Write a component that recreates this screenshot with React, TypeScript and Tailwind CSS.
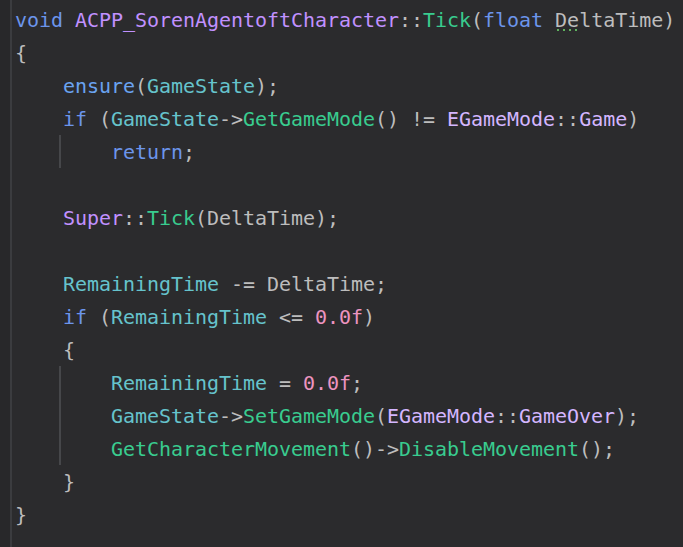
import React from "react";

type Tok = [string, string];

const K = "text-[#6c95eb]";
const C = "text-[#c191ff]";
const E = "text-[#d4b6ff]";
const M = "text-[#39cc8f]";
const F = "text-[#66c3cc]";
const N = "text-[#ed94c0]";
const D = "text-[#bdbdbd]";
const MAC = "text-[#6aa3f0]";

type Line = { indent: number; guide?: boolean; toks: Tok[] };

const lines: Line[] = [
  {
    indent: 0,
    toks: [
      [K, "void "],
      [C, "ACPP_SorenAgentoftCharacter"],
      [D, "::"],
      [M, "Tick"],
      [D, "("],
      [K, "float "],
      ["DELTA", ""],
      [D, ")"],
    ],
  },
  { indent: 0, toks: [[D, "{"]] },
  { indent: 1, toks: [[MAC, "ensure"], [D, "("], [F, "GameState"], [D, ");"]] },
  {
    indent: 1,
    toks: [
      [K, "if "],
      [D, "("],
      [F, "GameState"],
      [D, "->"],
      [M, "GetGameMode"],
      [D, "() != "],
      [E, "EGameMode"],
      [D, "::"],
      [E, "Game"],
      [D, ")"],
    ],
  },
  { indent: 2, guide: true, toks: [[K, "return"], [D, ";"]] },
  { indent: 0, toks: [] },
  { indent: 1, toks: [[C, "Super"], [D, "::"], [M, "Tick"], [D, "(DeltaTime);"]] },
  { indent: 0, toks: [] },
  { indent: 1, toks: [[F, "RemainingTime"], [D, " -= DeltaTime;"]] },
  {
    indent: 1,
    toks: [
      [K, "if "],
      [D, "("],
      [F, "RemainingTime"],
      [D, " <= "],
      [N, "0.0f"],
      [D, ")"],
    ],
  },
  { indent: 1, toks: [[D, "{"]] },
  { indent: 2, guide: true, toks: [[F, "RemainingTime"], [D, " = "], [N, "0.0f"], [D, ";"]] },
  {
    indent: 2,
    guide: true,
    toks: [
      [F, "GameState"],
      [D, "->"],
      [M, "SetGameMode"],
      [D, "("],
      [E, "EGameMode"],
      [D, "::"],
      [E, "GameOver"],
      [D, ");"],
    ],
  },
  {
    indent: 2,
    guide: true,
    toks: [
      [M, "GetCharacterMovement"],
      [D, "()->"],
      [M, "DisableMovement"],
      [D, "();"],
    ],
  },
  { indent: 1, toks: [[D, "}"]] },
  { indent: 0, toks: [[D, "}"]] },
];

function Delta() {
  return (
    <span className="text-[#bdbdbd]">
      <span className="relative inline-block">
        De
        <svg
          className="absolute left-[2px] top-[24px]"
          width="22"
          height="3"
          viewBox="0 0 22 3"
        >
          <rect x="0" y="0" width="2" height="2" fill="#5fb35f" />
          <rect x="6" y="0" width="2" height="2" fill="#5fb35f" />
          <rect x="12" y="0" width="2" height="2" fill="#5fb35f" />
          <rect x="18" y="0" width="2" height="2" fill="#5fb35f" />
        </svg>
      </span>
      ltaTime
    </span>
  );
}

function Code({ toks }: { toks: Tok[] }) {
  return (
    <span className="whitespace-pre">
      {toks.map(([c, t], i) =>
        c === "DELTA" ? <Delta key={i} /> : <span key={i} className={c}>{t}</span>
      )}
    </span>
  );
}

export default function App() {
  return (
    <div
      className="flex h-[547px] w-[683px] overflow-hidden bg-[#2b2b2d]"
      style={{ fontFamily: '"DejaVu Sans Mono", "Liberation Mono", monospace' }}
    >
      <div className="w-[10px] shrink-0 bg-[#28282a]" />
      <div className="w-[2px] shrink-0 bg-[#3b3c3f]" />
      <div className="flex flex-col pt-[3px] pl-[3px] text-[20px] tracking-[-0.04px]">
        {lines.map((l, i) => (
          <div key={i} className="flex h-[33px] items-center">
            {l.guide ? (
              <>
                <span className="w-[44px] shrink-0" />
                <span className="h-[33px] w-[2px] shrink-0 bg-[#46474a]" />
                <span className="w-[50px] shrink-0" />
              </>
            ) : (
              <span className="shrink-0" style={{ width: l.indent * 48 }} />
            )}
            <Code toks={l.toks} />
          </div>
        ))}
      </div>
    </div>
  );
}
